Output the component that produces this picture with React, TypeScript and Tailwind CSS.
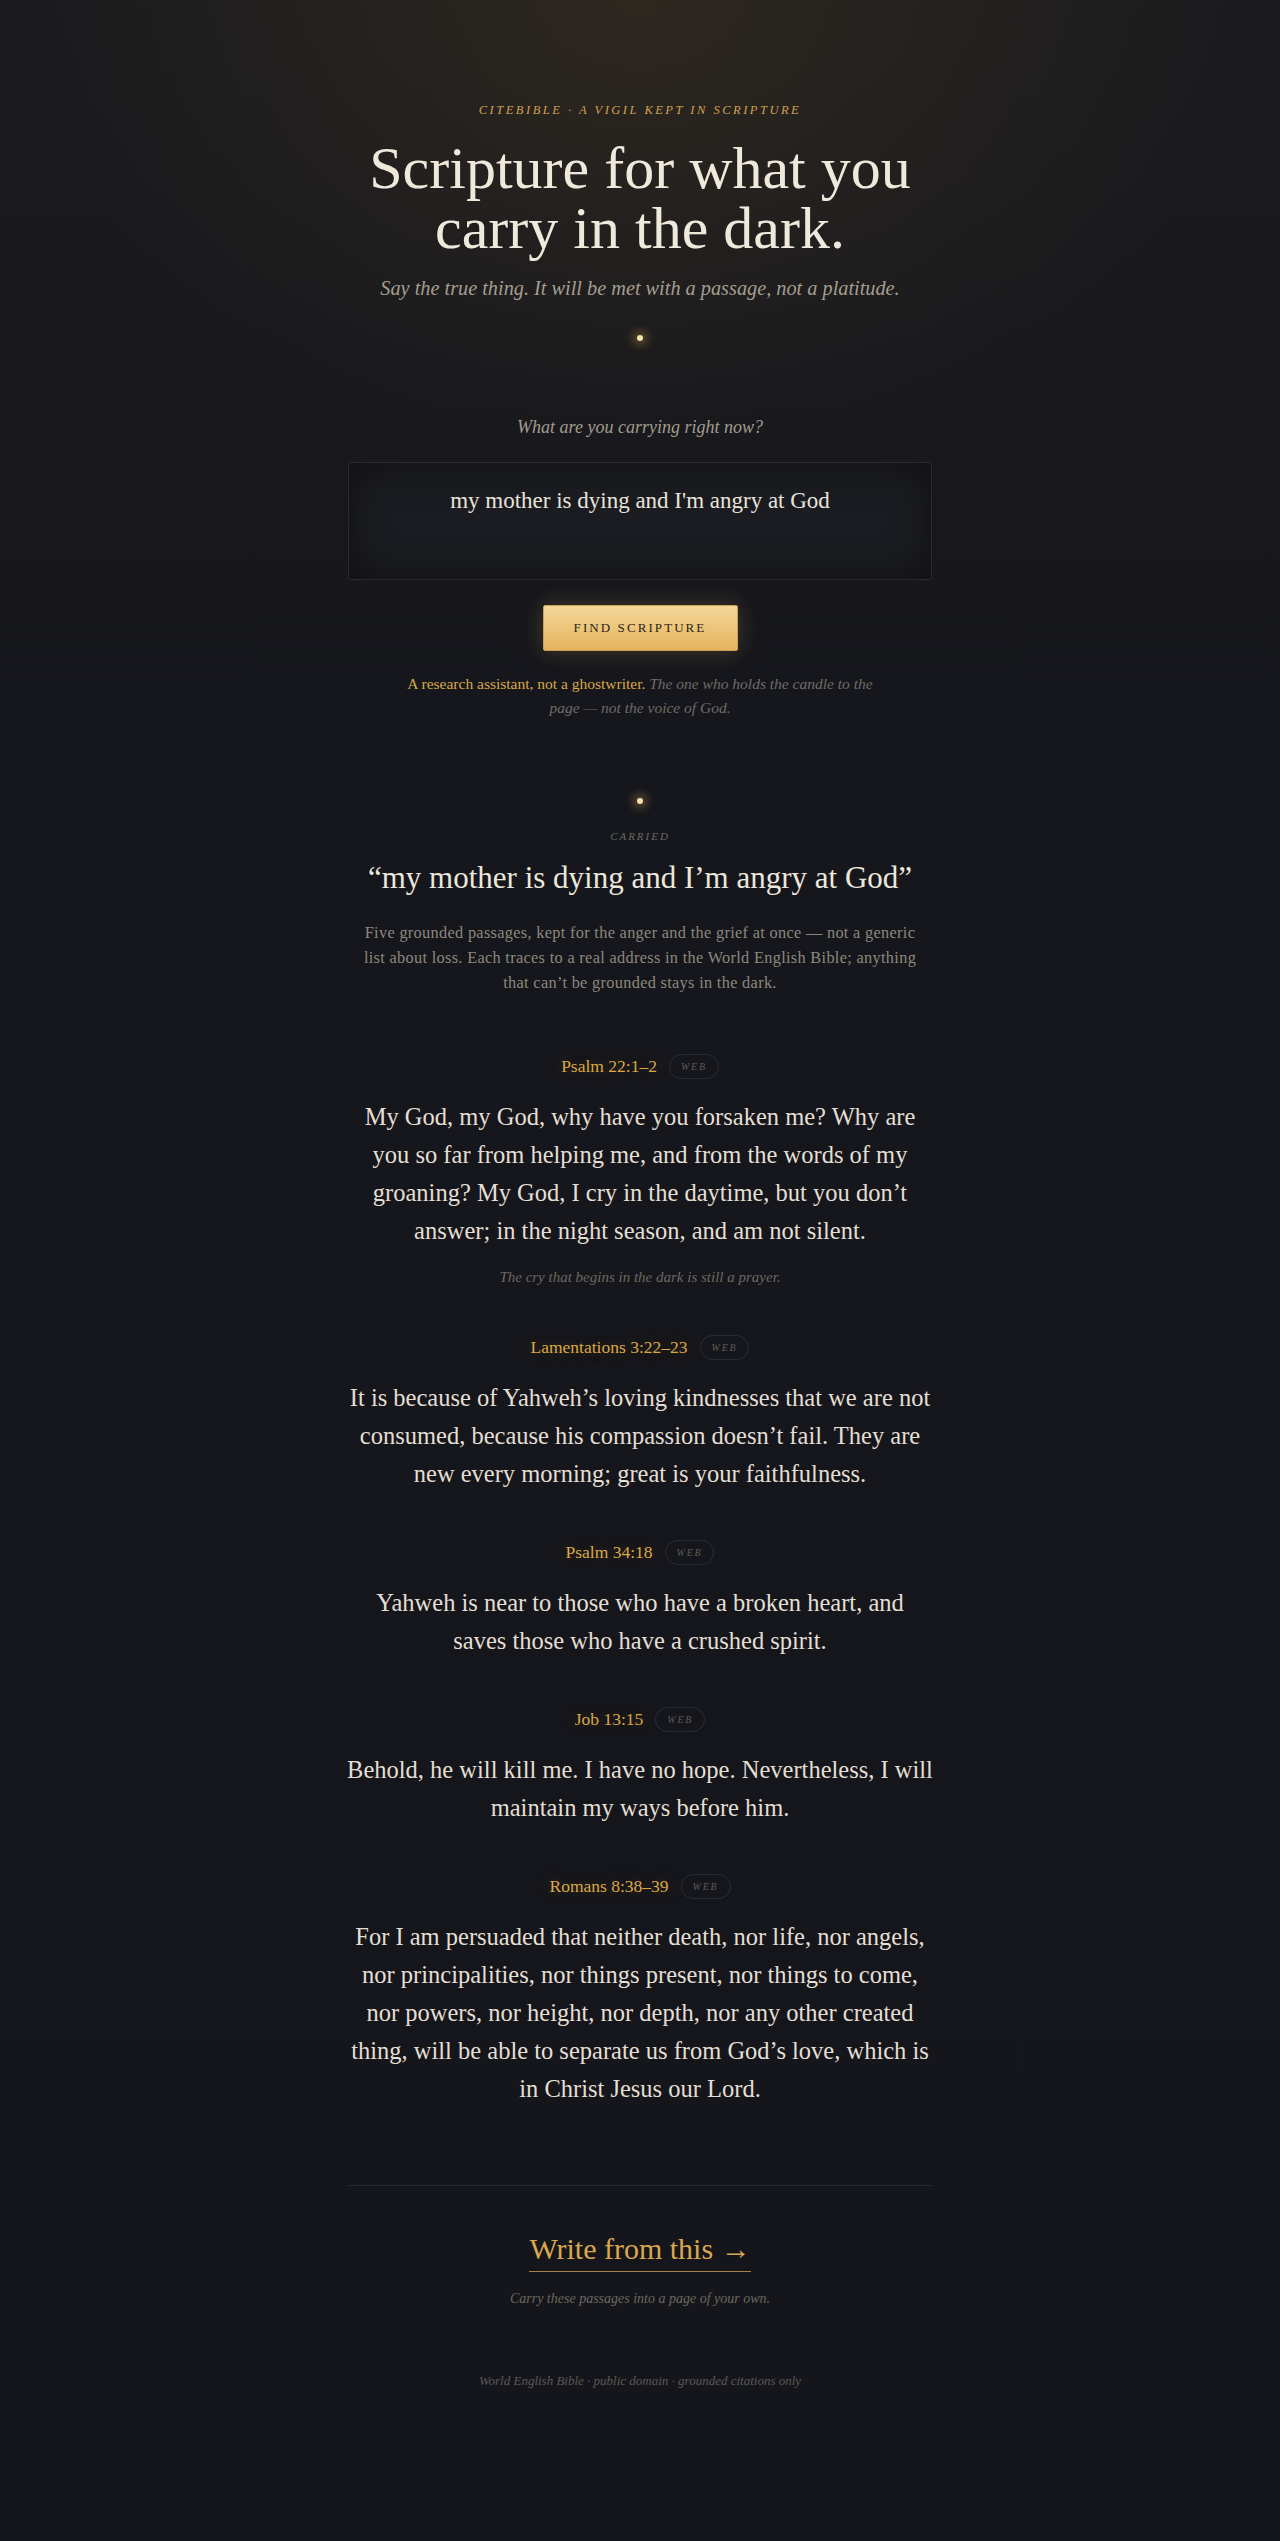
import React from "react";

type Passage = { ref: string; lines: string[]; note?: string };

const passages: Passage[] = [
  {
    ref: "Psalm 22:1–2",
    lines: [
      "My God, my God, why have you forsaken me? Why are",
      "you so far from helping me, and from the words of my",
      "groaning? My God, I cry in the daytime, but you don’t",
      "answer; in the night season, and am not silent.",
    ],
    note: "The cry that begins in the dark is still a prayer.",
  },
  {
    ref: "Lamentations 3:22–23",
    lines: [
      "It is because of Yahweh’s loving kindnesses that we are not",
      "consumed, because his compassion doesn’t fail. They are",
      "new every morning; great is your faithfulness.",
    ],
  },
  {
    ref: "Psalm 34:18",
    lines: ["Yahweh is near to those who have a broken heart, and", "saves those who have a crushed spirit."],
  },
  {
    ref: "Job 13:15",
    lines: ["Behold, he will kill me. I have no hope. Nevertheless, I will", "maintain my ways before him."],
  },
  {
    ref: "Romans 8:38–39",
    lines: [
      "For I am persuaded that neither death, nor life, nor angels,",
      "nor principalities, nor things present, nor things to come,",
      "nor powers, nor height, nor depth, nor any other created",
      "thing, will be able to separate us from God’s love, which is",
      "in Christ Jesus our Lord.",
    ],
  },
];

function Candle() {
  return (
    <div className="flex h-[6px] justify-center">
      <span className="block h-[6px] w-[6px] rounded-full bg-[#f6dfa9] shadow-[0_0_10px_4px_rgba(226,174,86,0.35)]" />
    </div>
  );
}

function Lines({ lines }: { lines: string[] }) {
  return (
    <>
      {lines.map((l, i) => (
        <React.Fragment key={i}>
          {l}
          {i < lines.length - 1 && <br />}
        </React.Fragment>
      ))}
    </>
  );
}

function PassageBlock({ p }: { p: Passage }) {
  return (
    <div className="flex flex-col items-center">
      <div className="flex h-[25px] items-center justify-center gap-[12px]">
        <span className="text-[17.5px] leading-[25px] text-[#dca744] [text-shadow:0_0_14px_rgba(217,166,69,0.25)]">
          {p.ref}
        </span>
        <span className="flex h-[25px] items-center rounded-full border border-[#2a2c33] px-[11px] text-[10px] italic tracking-[0.18em] text-[#5f5c56]">
          WEB
        </span>
      </div>
      <p className="mt-[19px] whitespace-nowrap text-center text-[24.5px] leading-[38px] text-[#e4dfd4]">
        <Lines lines={p.lines} />
      </p>
      {p.note && (
        <p className="mt-[16px] text-center text-[15px] italic leading-[22px] text-[#6b675f]">{p.note}</p>
      )}
    </div>
  );
}

export default function App() {
  return (
    <div
      className="min-h-screen w-full bg-[#15161b] bg-[radial-gradient(ellipse_600px_460px_at_50%_0%,rgba(70,56,34,0.42),rgba(21,22,27,0)_100%),linear-gradient(180deg,#1b1b1e_0px,#16171c_700px,#15161b_100%)] text-[#ece7dc]"
      style={{ fontFamily: '"Liberation Serif", "Times New Roman", serif' }}
    >
      <main className="mx-auto flex w-[584px] flex-col items-center pt-[100px] pb-[150px] text-center">
        <p className="text-[12.5px] italic leading-[20px] tracking-[0.2em] text-[#d2a24e]">
          CITEBIBLE · A VIGIL KEPT IN SCRIPTURE
        </p>
        <h1 className="mt-[18px] text-[60px] font-normal leading-[60px] text-[#efe9dc]">
          Scripture for what you
          <br />
          carry in the dark.
        </h1>
        <p className="mt-[16px] text-[20.3px] italic leading-[28px] text-[#a49e90]">
          Say the true thing. It will be met with a passage, not a platitude.
        </p>
        <div className="mt-[33px] w-full">
          <Candle />
        </div>

        <p className="mt-[73px] text-[18px] italic leading-[26px] text-[#a19b8e]">What are you carrying right now?</p>
        <textarea
          aria-label="What are you carrying right now?"
          defaultValue="my mother is dying and I'm angry at God"
          className="mt-[22px] h-[118px] w-full resize-none rounded-[2px] border border-[#2a2b31] bg-[#1b1c21] px-6 pt-[22px] text-center text-[23px] leading-[32px] text-[#e8e4da] shadow-[inset_0_0_40px_rgba(0,0,0,0.45)] outline-none"
          style={{ fontFamily: '"Liberation Serif", "Times New Roman", serif' }}
        />
        <button
          className="mt-[25px] h-[46px] w-[195px] rounded-[2px] border border-[#caa055] bg-[linear-gradient(180deg,#f4d798,#e6b35e)] text-[13px] tracking-[0.16em] text-[#2a2418] shadow-[0_0_22px_rgba(232,180,95,0.22)]"
          style={{ fontFamily: '"Liberation Serif", "Times New Roman", serif' }}
        >
          FIND SCRIPTURE
        </button>
        <p className="mt-[21px] whitespace-nowrap text-[15.5px] leading-[24px]">
          <span className="text-[#d9a74a]">A research assistant, not a ghostwriter.</span>{" "}
          <span className="italic text-[#6f6c66]">
            The one who holds the candle to the
            <br />
            page — not the voice of God.
          </span>
        </p>

        <div className="mt-[78px] w-full">
          <Candle />
        </div>
        <p className="mt-[24px] text-[11px] italic leading-[16px] tracking-[0.18em] text-[#6b675f]">CARRIED</p>
        <h2 className="mt-[14px] text-[31px] font-normal leading-[40px] text-[#ece7dc]">
          “my mother is dying and I’m angry at God”
        </h2>
        <p className="mt-[22px] whitespace-nowrap text-[16.3px] leading-[25px] tracking-[0.02em] text-[#8d887d]">
          Five grounded passages, kept for the anger and the grief at once — not a generic
          <br />
          list about loss. Each traces to a real address in the World English Bible; anything
          <br />
          that can’t be grounded stays in the dark.
        </p>

        <div className="mt-[59px] flex w-full flex-col gap-[47px]">
          {passages.map((p) => (
            <PassageBlock key={p.ref} p={p} />
          ))}
        </div>

        <div className="mt-[77px] w-full border-t border-[#25272d]" />

        <a
          href="#"
          className="mt-[45px] inline-block border-b border-[#a5844a] pb-[4px] text-[30px] leading-[36px] text-[#d9a84e] no-underline"
        >
          Write from this →
        </a>
        <p className="mt-[17px] text-[14px] italic leading-[20px] text-[#6b675f]">
          Carry these passages into a page of your own.
        </p>
        <p className="mt-[62px] text-[13px] italic leading-[20px] text-[#5c5a55]">
          World English Bible · public domain · grounded citations only
        </p>
      </main>
    </div>
  );
}
